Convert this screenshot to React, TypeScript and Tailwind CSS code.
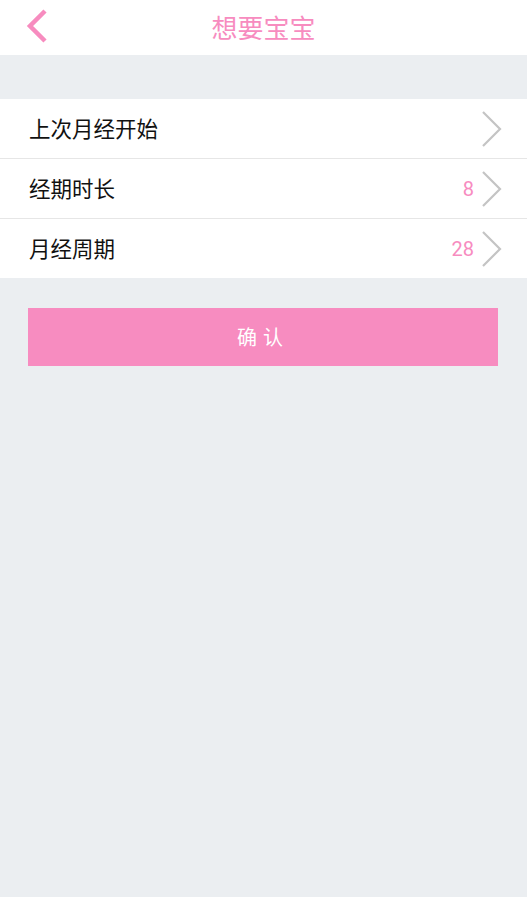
import React from "react";

const rows = [
  { label: "上次月经开始", value: "" },
  { label: "经期时长", value: "8" },
  { label: "月经周期", value: "28" },
];

function Chevron() {
  return (
    <svg width="24" height="38" viewBox="0 0 24 38" className="shrink-0">
      <polyline points="3,2 20,19 3,36" fill="none" stroke="#c4c4c4" strokeWidth="2.2" />
    </svg>
  );
}

export default function App() {
  return (
    <div
      className="flex min-h-[897px] flex-col bg-[#ebeef1]"
      style={{ fontFamily: '"Noto Sans CJK SC", "Noto Sans", sans-serif' }}
    >
      <header className="relative flex h-[55px] items-center justify-center bg-white">
        <svg width="26" height="36" viewBox="0 0 26 36" className="absolute left-[25px] top-[8px]">
          <polyline points="20,3 5,18 20,33" fill="none" stroke="#f78cbf" strokeWidth="4.5" />
        </svg>
        <h1 className="-mt-[2px] text-[26px] leading-none text-[#f78cbf]">想要宝宝</h1>
      </header>

      <div className="mt-[44px] flex flex-col gap-px bg-[#e6e6e6]">
        {rows.map((r) => (
          <div key={r.label} className="flex h-[59px] items-center bg-white pl-[29px] pr-[23px]">
            <span className="flex-1 text-[21.5px] text-[#111]">{r.label}</span>
            {r.value && (
              <span
                className="mr-[6px] text-[20px] text-[#f78cbf]"
                style={{ fontFamily: "Roboto, sans-serif" }}
              >
                {r.value}
              </span>
            )}
            <Chevron />
          </div>
        ))}
      </div>

      <div className="px-[28px] pt-[30px]">
        <button className="flex h-[58px] w-[470px] items-center justify-center bg-[#f78cc0] text-[20px] tracking-[6px] text-white">
          确认
        </button>
      </div>
    </div>
  );
}
